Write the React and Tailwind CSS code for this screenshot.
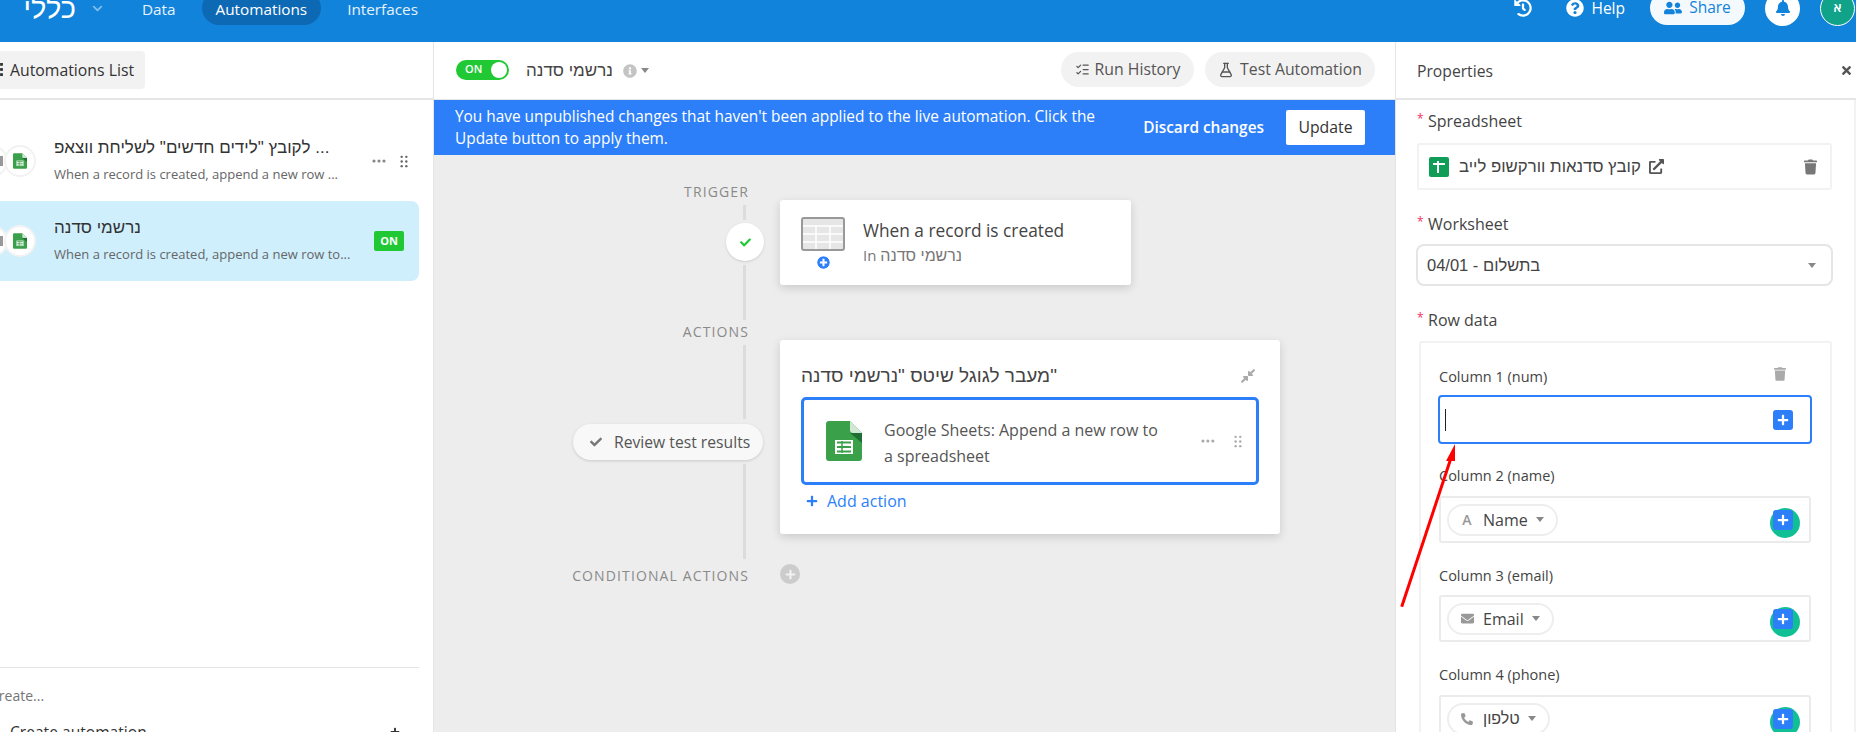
import React from 'react';
import { FaHistory, FaQuestionCircle, FaUserFriends, FaBell, FaTrash, FaCheck, FaPhoneAlt, FaEnvelope, FaExternalLinkAlt, FaInfoCircle, FaPlus, FaPlusCircle, FaCompressAlt, FaTimes } from 'react-icons/fa';
import { ChevronDown, FlaskConical, ListChecks } from 'lucide-react';

function SheetsGlyph({ className }) {
  return (
    <svg viewBox="0 0 36 40" className={className}>
      <path d="M2 0H24L36 12V37a3 3 0 0 1-3 3H3a3 3 0 0 1-3-3V3a3 3 0 0 1 3-3Z" fill="#3aa04a" />
      <path d="M24 0L36 12H27a3 3 0 0 1-3-3Z" fill="#cfe7d3" />
      <path d="M24 12H36V22Z" fill="#1f6e33" />
      <path d="M9 19H27V33H9Z" fill="#fff" />
      <path d="M11 21.5H25M11 26H25M11 30.5H25" stroke="#3aa04a" strokeWidth="2" />
      <path d="M16 20V32" stroke="#3aa04a" strokeWidth="1.5" />
    </svg>
  );
}

function Grip({ className }) {
  return (
    <svg viewBox="0 0 8 14" className={className} fill="currentColor">
      <circle cx="1.5" cy="2" r="1.3" /><circle cx="6.5" cy="2" r="1.3" />
      <circle cx="1.5" cy="7" r="1.3" /><circle cx="6.5" cy="7" r="1.3" />
      <circle cx="1.5" cy="12" r="1.3" /><circle cx="6.5" cy="12" r="1.3" />
    </svg>
  );
}

function Dots({ className }) {
  return (
    <svg viewBox="0 0 14 4" className={className} fill="currentColor">
      <circle cx="2" cy="2" r="1.6" /><circle cx="7" cy="2" r="1.6" /><circle cx="12" cy="2" r="1.6" />
    </svg>
  );
}

function IconPair() {
  return (
    <div className="flex -ml-[24px] shrink-0">
      <div className="w-8 h-8 rounded-full bg-white border-2 border-[#f2f2f2] flex items-center justify-end pr-[3px]">
        <div className="w-[10px] h-[10px] bg-[#999]" />
      </div>
      <div className="w-8 h-8 -ml-[4px] rounded-full bg-white border-2 border-[#f2f2f2] flex items-center justify-center z-10">
        <SheetsGlyph className="w-[14px] h-[16px]" />
      </div>
    </div>
  );
}

function Caret({ className }) {
  return <div className={`w-0 h-0 border-l-[4px] border-r-[4px] border-t-[5px] border-l-transparent border-r-transparent border-t-[#888] ${className || ''}`} />;
}

function PlusBox() {
  return (
    <div className="w-5 h-5 rounded-[3px] bg-[#2d7ff9] flex items-center justify-center relative z-10">
      <FaPlus className="w-[12px] h-[12px] text-white" />
    </div>
  );
}

function TokenInput({ mt, icon, label, rtl }) {
  return (
    <div className={`${mt} h-[47px] w-[372px] ml-[1px] border-2 border-[#ebebeb] rounded-[3px] flex items-center justify-between pl-[6px] pr-[16px]`}>
      <div className="h-[32px] rounded-full border-2 border-[#eeeeee] flex items-center pl-[11px] pr-[12px]">
        <span className="w-[14px] flex justify-center text-[#999]">{icon}</span>
        <span className={`ml-[9px] text-[16px] text-[#444] ${rtl ? "font-['Liberation_Sans',sans-serif]" : ''}`} dir={rtl ? 'rtl' : 'ltr'}>{label}</span>
        <Caret className="ml-[8px]" />
      </div>
      <div className="relative">
        <div className="absolute -left-[3px] -top-[2px] w-[30px] h-[30px] rounded-full bg-[#11bf95]" />
        <PlusBox />
      </div>
    </div>
  );
}

function FieldLabel({ mt, children }) {
  return (
    <div className={`${mt || ''} h-5 flex items-center text-[16px] font-medium text-[#444]`}>
      <span className="w-[11px] text-[#ef3061] text-[12px] -mt-[5px]">*</span>
      {children}
    </div>
  );
}

function ColumnLabel({ mt, children }) {
  return <div className={`${mt || ''} h-5 ml-[1px] flex items-center text-[14.5px] font-medium text-[#444]`}>{children}</div>;
}

export default function App() {
  return (
    <div className="relative w-screen h-screen overflow-hidden flex flex-col bg-white font-['Open_Sans','Liberation_Sans',sans-serif] text-[#333]">
      {/* top bar */}
      <header className="h-[42px] shrink-0 bg-[#1283da] overflow-hidden">
        <div className="-mt-[9px] h-[34px] flex items-center text-white">
          <span className="ml-[26px] w-[50px] text-[29px] font-medium leading-none font-['Liberation_Sans',sans-serif]" dir="rtl">כללי</span>
          <ChevronDown className="ml-[14px] w-[15px] h-[15px] text-[#7fbcec]" strokeWidth={3} />
          <nav className="ml-[23px] flex items-center gap-3 text-[15.3px]">
            <span className="px-[14px] h-[34px] pt-[2px] flex items-center text-white/90">Data</span>
            <span className="px-[14px] h-[34px] pt-[2px] flex items-center bg-[#0e69b4] rounded-full">Automations</span>
            <span className="px-[14px] h-[34px] pt-[2px] flex items-center text-white/90">Interfaces</span>
          </nav>
          <div className="ml-auto mr-[1px] flex items-center text-[15.5px]">
            <FaHistory className="w-[18px] h-[18px]" />
            <FaQuestionCircle className="ml-[34px] w-[18px] h-[18px]" />
            <span className="ml-[7px] pt-[1px]">Help</span>
            <span className="ml-[25px] w-[95px] h-[34px] bg-[#f4f9fe] text-[#1283da] rounded-full flex items-center justify-center gap-[7px]">
              <FaUserFriends className="w-[18px] h-[18px]" />Share
            </span>
            <span className="ml-[20px] w-[35px] h-[35px] rounded-full bg-white flex items-center justify-center">
              <FaBell className="w-[16px] h-[16px] text-[#1283da]" />
            </span>
            <span className="ml-[20px] w-[35px] h-[35px] rounded-full bg-[#11a38a] border border-white flex items-center justify-center text-[13px] font-semibold">א</span>
          </div>
        </div>
      </header>

      <div className="flex flex-1 min-h-0">
        {/* automations list */}
        <aside className="w-[434px] shrink-0 border-r border-[#e5e5e5] flex flex-col overflow-hidden">
          <div className="h-[58px] shrink-0 border-b-2 border-[#e5e5e5] flex items-center">
            <div className="w-[145px] h-[38px] -mt-[1px] bg-[#f2f2f2] rounded-r-[4px] flex items-center text-[15.8px] font-medium">
              <svg viewBox="0 0 3 14" className="w-[3px] h-[13px] text-[#333]" fill="currentColor">
                <rect width="3" height="3" /><rect y="5.5" width="3" height="3" /><rect y="11" width="3" height="3" />
              </svg>
              <span className="ml-[7px] pt-[2px]">Automations List</span>
            </div>
          </div>
          <div className="flex-1 pt-[21px] pr-[14px]">
            <div className="h-[80px] flex items-center">
              <IconPair />
              <div className="ml-[18px] w-[284px]">
                <div className="text-[17px] leading-[26px] truncate font-['Liberation_Sans',sans-serif]" dir="ltr">לקובץ "לידים חדשים" לשליחת ווצאפ ...</div>
                <div className="text-[13px] leading-[26px] text-[#666] truncate">When a record is created, append a new row ...</div>
              </div>
              <Dots className="ml-[34px] w-[14px] h-[4px] text-[#888]" />
              <Grip className="ml-[14px] w-[8px] h-[13px] text-[#666]" />
            </div>
            <div className="h-[80px] flex items-center bg-[#cfeffd] rounded-r-[8px]">
              <IconPair />
              <div className="ml-[18px] w-[297px]">
                <div className="text-[17px] leading-[26px] w-fit font-['Liberation_Sans',sans-serif]" dir="rtl">נרשמי סדנה</div>
                <div className="text-[13px] leading-[26px] text-[#666] truncate">When a record is created, append a new row to...</div>
              </div>
              <span className="ml-[23px] w-[30px] h-[20px] rounded-[2px] bg-[#20c933] text-white text-[11px] font-bold flex items-center justify-center">ON</span>
            </div>
          </div>
          <div className="h-[65px] shrink-0 mr-[14px] border-t border-[#e5e5e5] overflow-hidden">
            <div className="-ml-[10px] mt-[20px] text-[14px] leading-[16px] text-[#757575]">Create...</div>
            <div className="mt-[18px] ml-[10px] mr-[19px] flex items-center justify-between text-[15.6px] leading-[20px]">
              <span>Create automation</span>
              <FaPlus className="w-[10px] h-[10px]" />
            </div>
          </div>
        </aside>

        {/* canvas column */}
        <main className="w-[961px] shrink-0 flex flex-col">
          <div className="h-[58px] shrink-0 border-b border-[#e5e5e5] flex items-center pl-[22px] pr-[20px]">
            <div className="w-[53px] h-[20px] rounded-full bg-[#20c933] flex items-center justify-between pl-[9px] pr-[2px] text-white text-[11px] font-semibold -mt-[2px]">
              ON<span className="w-[16px] h-[16px] rounded-full bg-white" />
            </div>
            <span className="ml-[17px] text-[17px] text-[#444] font-['Liberation_Sans',sans-serif]" dir="rtl">נרשמי סדנה</span>
            <FaInfoCircle className="ml-[10px] w-[14px] h-[14px] text-[#c4c4c4]" />
            <Caret className="ml-[4px]" />
            <div className="ml-auto h-[35px] w-[133px] pt-[1px] rounded-full bg-[#f2f2f2] flex items-center justify-center gap-[5px] text-[15.8px] text-[#555] -mt-[3px]">
              <ListChecks className="w-[15px] h-[15px]" /><span className="pt-[1px]">Run History</span>
            </div>
            <div className="ml-[11px] h-[35px] w-[170px] pt-[1px] rounded-full bg-[#f2f2f2] flex items-center justify-center gap-[6px] text-[15.8px] text-[#555] -mt-[3px]">
              <FlaskConical className="w-[16px] h-[16px]" /><span className="pt-[1px]">Test Automation</span>
            </div>
          </div>
          <div className="h-[55px] shrink-0 bg-[#2d7ff9] flex items-center pl-[21px] pr-[30px] text-white">
            <p className="w-[660px] pt-[1px] text-[15.4px] leading-[22px]">You have unpublished changes that haven't been applied to the live automation. Click the Update button to apply them.</p>
            <span className="ml-auto text-[15.4px] font-semibold">Discard changes</span>
            <span className="ml-[22px] w-[79px] h-[35px] bg-white rounded-[2px] text-[#333] text-[15.8px] font-medium flex items-center justify-center">Update</span>
          </div>
          <div className="flex-1 bg-[#ededed] flex">
            {/* rail */}
            <div className="w-[346px] shrink-0 pt-[30px] flex flex-col items-end">
              <div className="mr-[31px] h-[14px] text-[14px] leading-[14px] tracking-[0.08em] text-[#8a8a8a]">TRIGGER</div>
              <div className="mr-[34px] mt-[6px] w-[3px] h-[15px] bg-[#dcdcdc]" />
              <div className="mr-[16px] mt-[3px] w-[38px] h-[38px] rounded-full bg-white flex items-center justify-center shadow-sm">
                <FaCheck className="w-[11px] h-[11px] text-[#20c933]" />
              </div>
              <div className="mr-[34px] mt-[4px] w-[3px] h-[55px] bg-[#dcdcdc]" />
              <div className="mr-[31px] mt-[5px] h-[14px] text-[14px] leading-[14px] tracking-[0.08em] text-[#8a8a8a]">ACTIONS</div>
              <div className="mr-[34px] mt-[6px] w-[3px] h-[74px] bg-[#dcdcdc]" />
              <div className="mr-[17px] mt-[5px] w-[190px] h-[36px] rounded-full bg-[#f8f8f8] shadow-[0_1px_3px_rgba(0,0,0,0.15)] flex items-center pl-[17px] text-[15.7px] text-[#555]">
                <FaCheck className="w-[12px] h-[12px] text-[#777]" />
                <span className="ml-[12px] pt-[1px] font-medium">Review test results</span>
              </div>
              <div className="mr-[34px] mt-[4px] w-[3px] h-[95px] bg-[#dcdcdc]" />
              <div className="mr-[31px] mt-[10px] h-[14px] text-[14px] leading-[14px] tracking-[0.08em] text-[#8a8a8a]">CONDITIONAL ACTIONS</div>
            </div>
            {/* cards */}
            <div className="pt-[45px]">
              <div className="w-[351px] h-[85px] bg-white rounded-[3px] shadow-[0_3px_10px_rgba(0,0,0,0.15)] flex items-center pl-[21px]">
                <div className="relative w-[44px] h-[48px] -mt-[4px]">
                  <svg viewBox="0 0 44 34" className="w-[44px] h-[34px]">
                    <rect x="1" y="1" width="42" height="32" rx="2" fill="#e6e6e6" stroke="#999" strokeWidth="2" />
                    <path d="M2 9H42M2 17H42M2 25H42M15 9V32M29 9V32" stroke="#fff" strokeWidth="1.5" />
                  </svg>
                  <FaPlusCircle className="absolute left-[16px] bottom-[-4px] w-[13px] h-[13px] text-[#2d7ff9] bg-white rounded-full" />
                </div>
                <div className="ml-[18px]">
                  <div className="text-[17.3px] leading-[24px] pt-[1px] font-medium text-[#444]">When a record is created</div>
                  <div className="text-[15px] leading-[24px] text-[#777]" dir="ltr">In <span className="text-[16px] font-['Liberation_Sans',sans-serif]">נרשמי סדנה</span></div>
                </div>
              </div>
              <div className="mt-[55px] w-[500px] h-[194px] bg-white rounded-[3px] shadow-[0_3px_10px_rgba(0,0,0,0.15)] pt-[22px] px-[21px]">
                <div className="h-[28px] flex items-center justify-between pr-[3px]">
                  <span className="text-[19px] text-[#444] font-['Liberation_Sans',sans-serif]" dir="rtl">"מעבר לגוגל שיטס "נרשמי סדנה</span>
                  <FaCompressAlt className="w-[16px] h-[16px] text-[#aaa]" />
                </div>
                <div className="mt-[7px] h-[88px] w-[458px] border-[3px] border-[#2d7ff9] rounded-[5px] flex items-center pl-[22px] pr-[14px]">
                  <SheetsGlyph className="w-[36px] h-[40px] shrink-0" />
                  <div className="ml-[22px] w-[290px] pt-[3px] text-[16px] leading-[26px] font-medium text-[#555]">Google Sheets: Append a new row to a spreadsheet</div>
                  <Dots className="ml-[32px] w-[14px] h-[4px] text-[#aaa]" />
                  <Grip className="ml-[19px] w-[8px] h-[13px] text-[#aaa]" />
                </div>
                <div className="mt-[6px] ml-[5px] h-[20px] flex items-center text-[16px] font-medium text-[#2d7ff9]">
                  <FaPlus className="w-[12px] h-[12px]" />
                  <span className="ml-[9px]">Add action</span>
                </div>
              </div>
              <div className="mt-[30px] w-5 h-5 rounded-full bg-[#cccccc] flex items-center justify-center">
                <FaPlus className="w-[11px] h-[11px] text-[#f2f2f2]" />
              </div>
            </div>
          </div>
        </main>

        {/* properties */}
        <aside className="flex-1 min-w-0 border-l border-[#e5e5e5] flex flex-col overflow-hidden">
          <div className="h-[58px] shrink-0 border-b-2 border-[#e5e5e5] flex items-center justify-between pl-[21px] pr-[3px]">
            <span className="text-[15.7px] pt-[3px] font-medium text-[#444]">Properties</span>
            <FaTimes className="w-[13px] h-[13px] text-[#555]" />
          </div>
          <div className="flex-1 min-h-0 pl-[21px] pt-[11px] border-r-2 border-[#f2f2f2] overflow-hidden">
            <FieldLabel>Spreadsheet</FieldLabel>
            <div className="mt-[12px] w-[415px] h-[47px] border-2 border-[#f2f2f2] rounded-[3px] flex items-center pl-[10px] pr-[13px]">
              <span className="w-5 h-5 rounded-[2px] bg-[#0f9d58] flex items-center justify-center relative">
                <span className="absolute w-[12px] h-[2px] top-[6px] bg-white" />
                <span className="absolute w-[2px] h-[12px] top-[4px] left-[8px] bg-white" />
              </span>
              <span className="ml-[10px] text-[16.8px] text-[#444] font-['Liberation_Sans',sans-serif]" dir="rtl">קובץ סדנאות וורקשופ לייב</span>
              <FaExternalLinkAlt className="ml-[8px] w-[15px] h-[15px] text-[#555]" />
              <FaTrash className="ml-auto w-[13px] h-[16px] text-[#777]" />
            </div>
            <FieldLabel mt="mt-[24px]">Worksheet</FieldLabel>
            <div className="mt-[10px] w-[417px] -ml-[1px] h-[42px] border-2 border-[#e5e5e5] rounded-[8px] flex items-center justify-between pl-[9px] pr-[15px]">
              <span className="text-[16.5px] text-[#444] font-['Liberation_Sans',sans-serif]" dir="ltr">04/01 - בתשלום</span>
              <Caret />
            </div>
            <FieldLabel mt="mt-[24px]">Row data</FieldLabel>
            <div className="mt-[11px] ml-[2px] w-[413px] h-[500px] border-2 border-[#f2f2f2] rounded-[3px] pl-[17px] pt-[24px]">
              <div className="flex items-center w-[374px]">
                <ColumnLabel>Column 1 (num)</ColumnLabel>
                <FaTrash className="ml-auto mr-[26px] -mt-[7px] w-[12px] h-[16px] text-[#aaa]" />
              </div>
              <div className="mt-[8px] h-[49px] w-[374px] border-2 border-[#2d7ff9] rounded-[4px] flex items-center justify-between pl-[5px] pr-[17px]">
                <span className="w-px h-[22px] bg-[#222]" />
                <PlusBox />
              </div>
              <ColumnLabel mt="mt-[22px]">Column 2 (name)</ColumnLabel>
              <TokenInput mt="mt-[10px]" label="Name" icon={<span className="text-[14px] font-semibold">A</span>} />
              <ColumnLabel mt="mt-[23px]">Column 3 (email)</ColumnLabel>
              <TokenInput mt="mt-[9px]" label="Email" icon={<FaEnvelope className="w-[13px] h-[13px]" />} />
              <ColumnLabel mt="mt-[23px]">Column 4 (phone)</ColumnLabel>
              <TokenInput mt="mt-[10px]" label="טלפון" rtl icon={<FaPhoneAlt className="w-[12px] h-[12px]" />} />
            </div>
          </div>
        </aside>
      </div>

      {/* red annotation arrow over the panel */}
      <svg viewBox="0 0 70 175" className="absolute left-[1395px] top-[440px] w-[70px] h-[175px]">
        <line x1="6.7" y1="166.7" x2="56" y2="18" stroke="#f00" strokeWidth="3" />
        <polygon points="60,4 51,21 60,21" fill="#f00" />
      </svg>
    </div>
  );
}
